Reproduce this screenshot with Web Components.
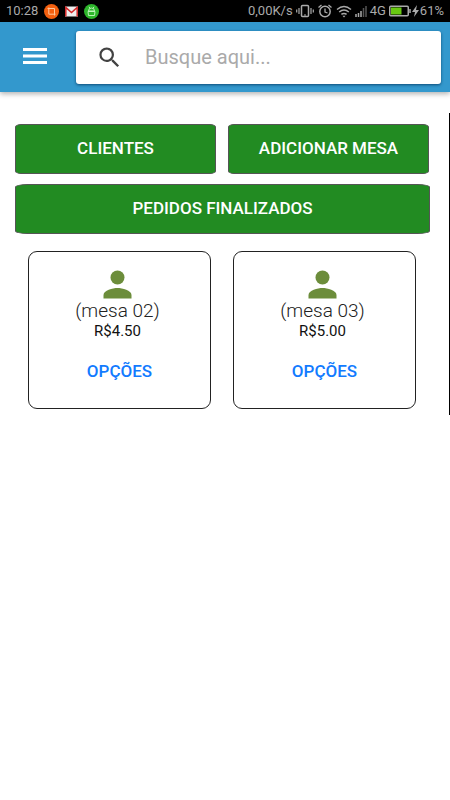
<!DOCTYPE html>
<html lang="pt-BR">
<head>
<meta charset="utf-8">
<meta name="viewport" content="width=device-width, initial-scale=1">
<title>Mesas</title>
<style>
body { margin: 0; background: #fff; font-family: Roboto, "Liberation Sans", sans-serif; color: #222; }
</style>
</head>
<body>
<mesa-app></mesa-app>
<script>
const define = (name, html) => customElements.define(name, class extends HTMLElement {
  constructor() {
    super();
    const t = document.createElement('template');
    t.innerHTML = html;
    this.attachShadow({ mode: 'open' }).append(t.content.cloneNode(true));
  }
});

define('status-bar', `
<style>
:host { display: flex; justify-content: space-between; align-items: center; height: 22px; padding: 0 6px; box-sizing: border-box; background: #000; color: #aaa; font-size: 13px; line-height: 22px; white-space: nowrap; }
div { display: flex; align-items: center; }
.left { gap: 6px; }
.right { gap: 3px; }
.level { display: flex; gap: 1px; }
svg { display: block; flex: none; }
</style>
<div class="left">
  <span>10:28</span>
  <svg width="15" height="15" viewBox="0 0 15 15"><circle cx="7.5" cy="7.5" r="7.5" fill="#f4600f"/><path d="M3.5 4.5h7v7M4.8 3.5v6.7h6.7" fill="none" stroke="#ffc79c" stroke-width="1"/></svg>
  <svg width="13" height="15" viewBox="0 0 13 15"><path d="M0 2.500h13v10H0z" fill="#eee"/><path d="M.8 12.500V3.500l5.700 5 5.700-5v9" fill="none" stroke="#d32525" stroke-width="1.500"/></svg>
  <svg width="15" height="15" viewBox="0 0 15 15"><circle cx="7.500" cy="7.500" r="7.500" fill="#2db52b"/><path d="M4.500 7a3 3 0 0 1 6 0zM4 7.500h7l-.5 4h-6zM5 2.800l1 1.500M10 2.800L9 4.300" fill="none" stroke="#c9f5c4" stroke-width=".9"/></svg>
</div>
<div class="right">
  <span>0,00K/s</span>
  <svg width="18" height="14" viewBox="0 0 18 14"><rect x="5.500" y="1.500" width="7" height="11" rx="1" fill="none" stroke="#aaa" stroke-width="1.500"/><path d="M3 4v6M.7 5.500v3M15 4v6M17.300 5.500v3" stroke="#aaa" stroke-width="1.200"/><path d="M8 11h2" stroke="#aaa"/></svg>
  <svg width="16" height="14" viewBox="0 0 16 14"><circle cx="8" cy="7.500" r="5.200" fill="none" stroke="#aaa" stroke-width="1.500"/><path d="M1.500 3.500L4.500 1M14.500 3.500l-3-2.500M8 4.500v3.500l2.500 1" fill="none" stroke="#aaa" stroke-width="1.300"/></svg>
  <svg width="16" height="13" viewBox="0 0 16 13"><path d="M1 4.500q7-6 14 0M3.200 7q4.800-4 9.600 0M5.400 9.400q2.600-2 5.200 0" fill="none" stroke="#aaa" stroke-width="1.500"/><path d="M6.500 10.700h3L8 12.500z" fill="#aaa"/></svg>
  <svg width="12" height="12" viewBox="0 0 12 12"><path d="M1 9v3M3.500 8v4M6 6v6" stroke="#aaa" stroke-width="1.500"/><path d="M8.500 3v9M11 1v11" stroke="#555" stroke-width="1.500"/></svg>
  <span>4G</span>
  <div class="level">
    <svg width="22" height="12" viewBox="0 0 22 12"><rect x=".75" y="1.250" width="18.500" height="9.500" rx="1" fill="none" stroke="#aaa" stroke-width="1.500"/><path d="M2 2.500h10.500v7H2z" fill="#68c811"/><path d="M21 4v4" stroke="#aaa" stroke-width="1.500"/></svg>
    <svg width="7" height="12" viewBox="0 0 7 12"><path d="M5 0L0 7h3L2 12l5-7H4z" fill="#aaa"/></svg>
    <span>61%</span>
  </div>
</div>`);

define('search-box', `
<style>
:host { display: flex; flex: 1; min-width: 0; }
label { display: flex; flex: 1; min-width: 0; align-items: center; gap: 22px; height: 53px; padding: 0 20px 1px; box-sizing: border-box; border-radius: 3px; background: #fff; box-shadow: 0 1px 3px rgba(0,50,90,.75); }
svg { flex: none; }
input { flex: 1; min-width: 0; padding: 0; border: 0; outline: 0; background: none; font: 20px Roboto, "Liberation Sans", sans-serif; color: #333; }
input::placeholder { color: #aaa; opacity: 1; }
</style>
<label>
  <svg width="27" height="27" viewBox="0 0 24 24" fill="#424242"><path d="M15.500 14h-.79l-.28-.27A6.471 6.471 0 0 0 16 9.500 6.500 6.500 0 1 0 9.500 16c1.610 0 3.090-.59 4.230-1.570l.27.28v.79l5 4.990L20.490 19l-4.990-5zm-6 0C7.010 14 5 11.990 5 9.500S7.010 5 9.500 5 14 7.010 14 9.500 11.990 14 9.500 14z"/></svg>
  <input type="search" placeholder="Busque aqui..." aria-label="Busque aqui">
</label>`);

define('app-header', `
<style>
:host { display: flex; align-items: center; gap: 23px; padding: 9px 9px 8px 17px; background: #3398cd; box-shadow: 0 2px 5px rgba(0,0,0,.3); }
button { display: grid; place-items: center; width: 36px; height: 36px; margin: 0; padding: 0; border: 0; background: none; color: #fff; }
</style>
<button type="button" aria-label="Menu"><svg width="36" height="36" viewBox="0 0 36 36" fill="currentColor"><path d="M6 8h24v3H6zM6 14.500h24v3H6zM6 21h24v3H6z"/></svg></button>
<search-box></search-box>`);

define('action-button', `
<style>
:host { display: block; flex: 1; min-width: 0; }
button { display: block; width: 100%; height: 50px; margin: 0; padding: 0 0 2px; border: 1px solid #555; border-radius: 3% / 6%; background: #228b22; color: #fff; font: 500 17px/24px Roboto, "Liberation Sans", sans-serif; text-transform: uppercase; }
</style>
<button type="button"><slot></slot></button>`);

define('mesa-card', `
<style>
:host { display: flex; flex-direction: column; align-items: center; height: 158px; padding: 13px 0 0; box-sizing: border-box; border: 1px solid #222; border-radius: 9px; }
svg { display: block; }
.name { padding-right: 4px; font-size: 19px; font-weight: 300; line-height: 22px; color: #222; }
.price { padding-right: 4px; font-size: 15px; line-height: 18px; color: #111; }
button { margin: 17px 0 0; padding: 0; border: 0; background: none; color: #127bff; font: 500 17px/28px Roboto, "Liberation Sans", sans-serif; }
</style>
<svg width="42" height="35" viewBox="0 0 42 35" fill="#6c8d3b"><circle cx="18.500" cy="12.500" r="7"/><path d="M4.500 33.500v-3.500c0-4.700 9.300-7 14-7s14 2.300 14 7v3.500z"/></svg>
<div class="name"><slot name="name"></slot></div>
<div class="price"><slot name="price"></slot></div>
<button type="button">OPÇÕES</button>`);

define('mesa-app', `
<style>
:host { display: block; }
main { margin-top: 21px; min-height: 302px; padding: 11px 19px 6px 15px; box-sizing: border-box; border-right: 1px solid #000; }
.actions { display: flex; gap: 12px; padding-right: 1px; margin-bottom: 10px; }
.cards { display: grid; grid-template-columns: 1fr 1fr; gap: 22px; padding: 17px 14px 0 13px; }
</style>
<status-bar></status-bar>
<app-header></app-header>
<main>
  <div class="actions">
    <action-button>Clientes</action-button>
    <action-button>Adicionar mesa</action-button>
  </div>
  <action-button>Pedidos finalizados</action-button>
  <div class="cards">
    <mesa-card><span slot="name">(mesa 02)</span><span slot="price">R$4.50</span></mesa-card>
    <mesa-card><span slot="name">(mesa 03)</span><span slot="price">R$5.00</span></mesa-card>
  </div>
</main>`);
</script>
</body>
</html>
